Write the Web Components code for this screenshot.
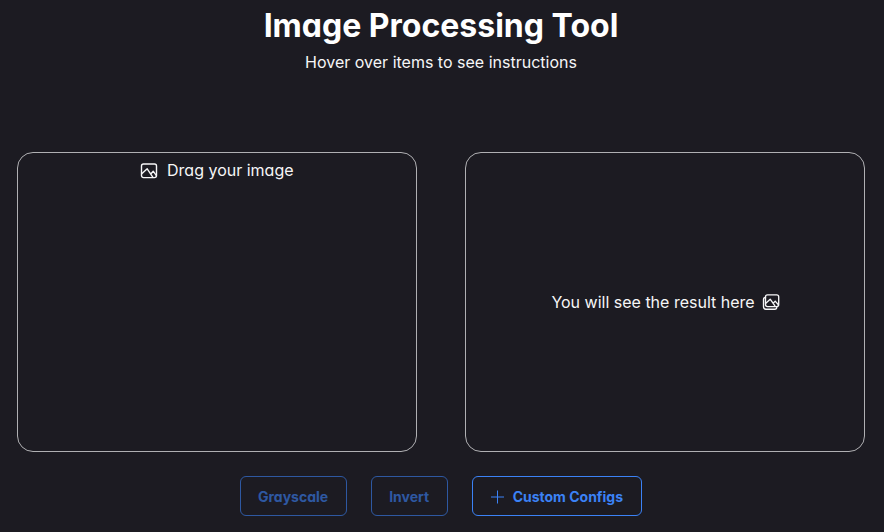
<!DOCTYPE html>
<html lang="en"><head><meta charset="utf-8"><title>Image Processing Tool</title>
<style>body{margin:0;background:#1c1b22;color:#fff;font-family:Inter,sans-serif;font-feature-settings:"cv11"}</style></head>
<body><processing-tool></processing-tool>
<script>
const define=(name,html)=>customElements.define(name,class extends HTMLElement{
 constructor(){super();this.attachShadow({mode:'open'}).innerHTML=html;}
});
define('tool-icon-image',`<style>:host{display:block;width:18px;height:18px;margin-top:2px}svg{display:block;width:18px;height:18px;fill:none;stroke:currentColor;stroke-width:1.4;stroke-linejoin:round;stroke-linecap:round}</style><svg viewBox="0 0 18 18"><rect x="1.5" y="2" width="15" height="13.6" rx="2"/><path d="M2 11.6 7.2 6.8l5.6 8.3M10.8 12l2.4-2.8 3 4.2"/></svg>`);
define('tool-icon-images',`<style>:host{display:block;width:18px;height:18px}svg{display:block;width:18px;height:18px;fill:none;stroke:currentColor;stroke-width:1.35;stroke-linejoin:round;stroke-linecap:round}</style><svg viewBox="0 0 18 18"><rect x="3.5" y="1.8" width="13.2" height="11.8" rx="2"/><path d="M3.5 4.5A2 2 0 0 0 1.5 6.5v7.3A2.4 2.4 0 0 0 3.9 16.2h8.7a2.2 2.2 0 0 0 2.2-2.2M3.8 10.3l4.4-4.1 4.6 6.4M11.2 10.3l2-2.2 3.2 3.7"/></svg>`);
define('tool-panel',`<style>:host{display:flex;box-sizing:border-box;width:400px;height:300px;border:1px solid #b0b0b3;border-radius:16px;justify-content:center;align-items:center;gap:7px;padding-left:1px;font-size:16px;line-height:20px;color:#f6f6f7}:host([top]){align-items:flex-start;padding:7px 0 0;gap:8.6px}</style><slot></slot>`);
define('tool-button',`<style>:host{display:block}button{font:700 14px/18px Inter,sans-serif;font-feature-settings:"cv11";height:40px;padding:2px 18px 0 17px;box-sizing:border-box;display:flex;align-items:center;justify-content:center;gap:8px;background:none;color:#3b82f6;border:1px solid;border-radius:6px}:host([off]) button{opacity:.6}</style><button><slot></slot></button>`);
define('processing-tool',`<style>:host{display:block;width:882px;height:532px;overflow:hidden}header{text-align:center;height:152px}h1{margin:0;padding-top:6px;font-size:32px;line-height:40px}p{margin:6px 0 0;font-size:16px;line-height:20px;color:#f6f6f7}main,footer{display:flex;justify-content:center}main{gap:48px}footer{gap:24px;margin-top:24px}svg{width:14px;height:14px;stroke:currentColor}.configs{margin-left:.5px}</style>
<header><h1>Image Processing Tool</h1><p>Hover over items to see instructions</p></header>
<main><tool-panel top><tool-icon-image></tool-icon-image><span>Drag your image</span></tool-panel><tool-panel><span>You will see the result here</span><tool-icon-images></tool-icon-images></tool-panel></main>
<footer><tool-button off>Grayscale</tool-button><tool-button off>Invert</tool-button><tool-button><svg viewBox="0 0 14 14"><path d="M7.5 .5v13M1 7h13"/></svg><span class="configs">Custom Configs</span></tool-button></footer>`);
</script></body></html>
